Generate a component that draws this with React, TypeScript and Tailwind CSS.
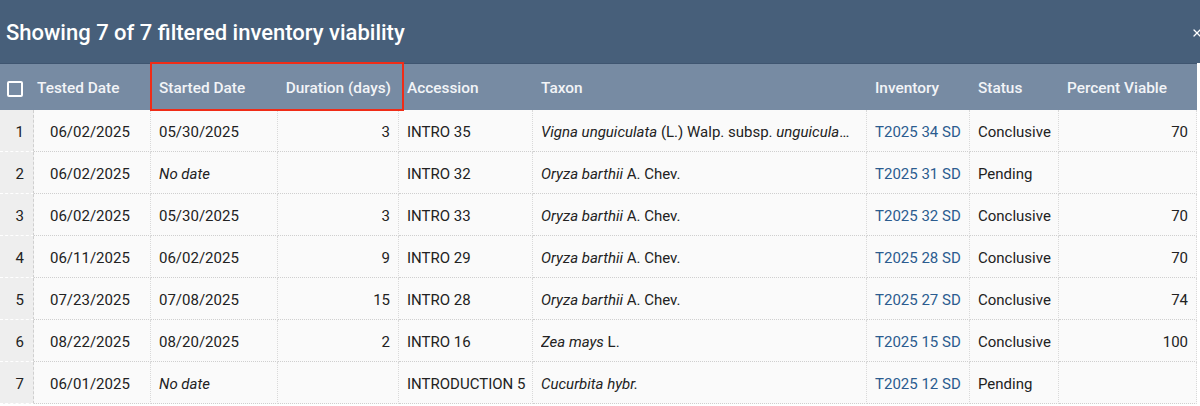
import { X } from "lucide-react";

type Row = {
	tested: string;
	started: string | null;
	duration: string;
	accession: string;
	taxon: React.ReactNode;
	inventory: string;
	status: string;
	viable: string;
};

const rows: Row[] = [
	{
		tested: "06/02/2025",
		started: "05/30/2025",
		duration: "3",
		accession: "INTRO 35",
		taxon: (
			<>
				<i>Vigna unguiculata</i> (L.) Walp. subsp. <i>unguiculata</i>
			</>
		),
		inventory: "T2025 34 SD",
		status: "Conclusive",
		viable: "70",
	},
	{
		tested: "06/02/2025",
		started: null,
		duration: "",
		accession: "INTRO 32",
		taxon: (
			<>
				<i>Oryza barthii</i> A. Chev.
			</>
		),
		inventory: "T2025 31 SD",
		status: "Pending",
		viable: "",
	},
	{
		tested: "06/02/2025",
		started: "05/30/2025",
		duration: "3",
		accession: "INTRO 33",
		taxon: (
			<>
				<i>Oryza barthii</i> A. Chev.
			</>
		),
		inventory: "T2025 32 SD",
		status: "Conclusive",
		viable: "70",
	},
	{
		tested: "06/11/2025",
		started: "06/02/2025",
		duration: "9",
		accession: "INTRO 29",
		taxon: (
			<>
				<i>Oryza barthii</i> A. Chev.
			</>
		),
		inventory: "T2025 28 SD",
		status: "Conclusive",
		viable: "70",
	},
	{
		tested: "07/23/2025",
		started: "07/08/2025",
		duration: "15",
		accession: "INTRO 28",
		taxon: (
			<>
				<i>Oryza barthii</i> A. Chev.
			</>
		),
		inventory: "T2025 27 SD",
		status: "Conclusive",
		viable: "74",
	},
	{
		tested: "08/22/2025",
		started: "08/20/2025",
		duration: "2",
		accession: "INTRO 16",
		taxon: (
			<>
				<i>Zea mays</i> L.
			</>
		),
		inventory: "T2025 15 SD",
		status: "Conclusive",
		viable: "100",
	},
	{
		tested: "06/01/2025",
		started: null,
		duration: "",
		accession: "INTRODUCTION 5",
		taxon: (
			<>
				<i>Cucurbita hybr.</i>
			</>
		),
		inventory: "T2025 12 SD",
		status: "Pending",
		viable: "",
	},
];

const cols =
	"grid grid-cols-[34px_117px_127px_121px_134px_334px_103px_89px_138px] w-[1197px]";

const cell =
	"flex h-[42px] items-center overflow-hidden whitespace-nowrap border-r border-b border-r-[#d9d9d9] border-b-[#cfcfcf] border-dotted bg-[#fafafa] px-2 pt-[3px]";

const App = () => {
	return (
		<div className="h-[406px] w-[1200px] overflow-hidden bg-white font-['Roboto',sans-serif] text-[15px] text-[#222]">
			<div className="relative flex h-[63px] items-center bg-[#475f7a] pl-[6px] pt-[2px]">
				<h2 className="text-[22px] font-medium text-white">
					Showing 7 of 7 filtered inventory viability
				</h2>
				<X size={12} strokeWidth={2.5} className="absolute -right-[3px] top-[27px] text-white" />
			</div>

			<div className="relative">
				<div className={`${cols} h-[47px] border-t border-[#3f5570] bg-[#778ba3] pt-[3px] text-[15.4px] font-medium text-[#f2f4f7]`}>
					<div className="flex items-center pl-[7px]">
						<span className="h-[16px] w-[16px] rounded-[2px] border-2 border-white" />
					</div>
					<div className="flex items-center pl-[3px]">Tested Date</div>
					<div className="flex items-center pl-2">Started Date</div>
					<div className="flex items-center justify-end pr-2">Duration (days)</div>
					<div className="flex items-center pl-2">Accession</div>
					<div className="flex items-center pl-2">Taxon</div>
					<div className="flex items-center pl-2">Inventory</div>
					<div className="flex items-center pl-2">Status</div>
					<div className="flex items-center pl-2">Percent Viable</div>
				</div>
				{/* highlight around the two date/duration headers */}
				<div className="pointer-events-none absolute left-[150px] top-[-1px] h-[49px] w-[254px] border-[2.5px] border-[#f02c17]" />
			</div>

			<div className={cols}>
				{rows.map((r, i) => (
					<div key={i} className="contents">
						<div className="flex h-[42px] items-center justify-end border-r border-b border-dashed border-r-[#cfcfcf] border-b-white bg-[#eeeeee] pr-[9px] pt-[3px]">
							{i + 1}
						</div>
						<div className={`${cell} pl-4`}>{r.tested}</div>
						<div className={cell}>
							{r.started ?? <i>No date</i>}
						</div>
						<div className={`${cell} justify-end`}>{r.duration}</div>
						<div className={cell}>{r.accession}</div>
						<div className={`${cell} pr-[16px]`}>
							<span className="truncate">{r.taxon}</span>
						</div>
						<div className={`${cell} text-[#2b5c8f]`}>{r.inventory}</div>
						<div className={cell}>{r.status}</div>
						<div className={`${cell} justify-end`}>{r.viable}</div>
					</div>
				))}
			</div>
		</div>
	);
};

export default App;
